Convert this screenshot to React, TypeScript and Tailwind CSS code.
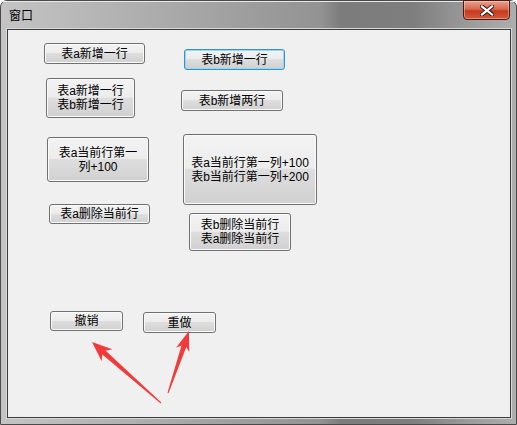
import React from "react";

type Btn = {
  x: number;
  y: number;
  w: number;
  h: number;
  lines: string[];
  focus?: boolean;
  lh?: string;
};

const font = { fontFamily: '"Liberation Sans", "Noto Sans CJK SC", sans-serif' };

function WinButton({ b }: { b: Btn }) {
  return (
    <div
      className={
        "absolute flex flex-col items-center justify-center rounded-[3px] border text-[12px] text-black " +
        (b.focus
          ? "border-[#3c8fcd] shadow-[inset_0_0_0_1px_#8fdcf8]"
          : "border-[#707070] shadow-[inset_0_0_0_1px_#fbfbfb]") +
        " bg-[linear-gradient(to_bottom,#f3f3f3_0%,#ececec_48%,#dedede_50%,#d0d0d0_100%)]"
      }
      style={{ left: b.x, top: b.y, width: b.w, height: b.h, ...font }}
    >
      <div className={(b.lh ?? "leading-[14px]") + " whitespace-nowrap text-center"}>
        {b.lines.map((l, i) => (
          <React.Fragment key={i}>
            {i > 0 && <br />}
            {l}
          </React.Fragment>
        ))}
      </div>
    </div>
  );
}

const buttons: Btn[] = [
  { x: 36, y: 13, w: 101, h: 21, lines: ["表a新增一行"] },
  { x: 38, y: 48, w: 89, h: 40, lines: ["表a新增一行", "表b新增一行"] },
  { x: 39, y: 107, w: 102, h: 45, lines: ["表a当前行第一", "列+100"] },
  { x: 41, y: 174, w: 101, h: 20, lines: ["表a删除当前行"] },
  { x: 176, y: 19, w: 101, h: 21, lines: ["表b新增一行"], focus: true },
  { x: 173, y: 60, w: 102, h: 21, lines: ["表b新增两行"] },
  {
    x: 175,
    y: 104,
    w: 134,
    h: 71,
    lines: ["表a当前行第一列+100", "表b当前行第一列+200"],
    lh: "leading-[14px]",
  },
  { x: 181, y: 183, w: 102, h: 38, lines: ["表b删除当前行", "表a删除当前行"] },
  { x: 42, y: 281, w: 73, h: 20, lines: ["撤销"] },
  { x: 135, y: 282, w: 73, h: 21, lines: ["重做"] },
];

export default function App() {
  return (
    <div className="relative h-[425px] w-[517px] overflow-hidden bg-white">
      <div className="flex h-[425px] w-[517px] flex-col rounded-t-[7px] border border-[#4a4a4a] bg-[linear-gradient(to_right,#c4c4c4_0%,#b0b0b0_25%,#9c9c9c_50%,#939393_62%,#7c7c7c_66%,#7e7e7e_80%,#9e9e9e_92%,#adadad_100%)]">
        {/* title bar */}
        <div className="relative flex h-[28px] items-center border-t border-[#e8e8e8] pl-[8px]">
          <span className="text-[12px] leading-none text-black" style={font}>
            窗口
          </span>
          <div className="absolute right-[6px] top-[-2px] flex h-[20px] w-[47px] items-center justify-center rounded-b-[4px] border border-[#4b1a10] bg-[linear-gradient(to_bottom,#e8a08e_0%,#d9684f_45%,#c43a1c_55%,#d5593a_100%)] shadow-[inset_0_0_0_1px_rgba(255,255,255,0.35)]">
            <svg width="14" height="11" viewBox="0 0 14 11">
              <path
                d="M2 1.5 L12 9.5 M12 1.5 L2 9.5"
                stroke="#3a1d17"
                strokeWidth="4.2"
                strokeLinecap="square"
              />
              <path
                d="M2 1.5 L12 9.5 M12 1.5 L2 9.5"
                stroke="#ffffff"
                strokeWidth="2.2"
                strokeLinecap="square"
              />
            </svg>
          </div>
        </div>
        {/* body frame */}
        <div className="flex flex-1 pb-[6px] pl-[6px] pr-[5px]">
          <div className="relative flex-1 border border-[#3c3c3c] bg-[#f0f0f0] shadow-[0_0_0_1px_#d8d8d8]">
            {buttons.map((b, i) => (
              <WinButton key={i} b={b} />
            ))}
          </div>
        </div>
      </div>
      <svg
        className="pointer-events-none absolute left-0 top-0"
        width="517"
        height="425"
        viewBox="0 0 517 425"
      >
        <polygon
          points="92,342 112.3,349.2 105.7,350.7 161.3,402.6 160.7,403.4 102.3,354.5 101.7,361.2"
          fill="#f23a3a"
        />
        <polygon
          points="189,331 189.2,352.1 186.3,347 168.5,393.2 167.5,392.8 181.5,345.4 176,347.7"
          fill="#f23a3a"
        />
      </svg>
    </div>
  );
}
